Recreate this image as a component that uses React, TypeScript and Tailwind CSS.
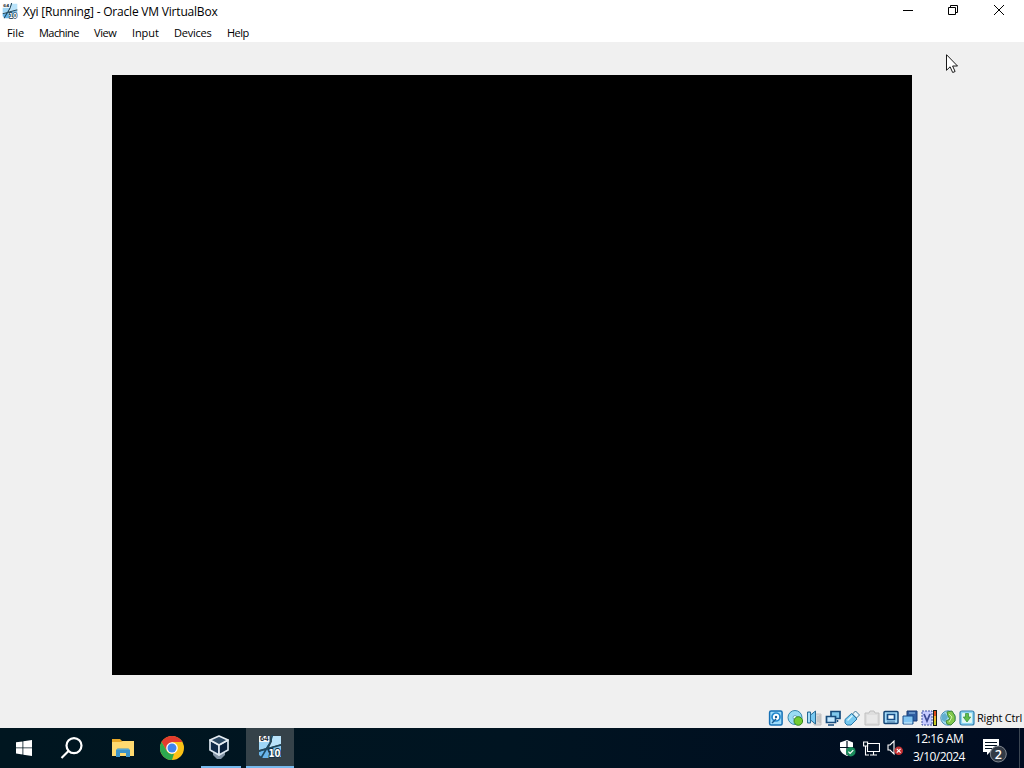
import type { ReactNode } from 'react'

const menus = [
  { label: 'File', className: 'w-8 tracking-[-0.1px]' },
  { label: 'Machine', className: 'w-[55px] tracking-[-0.55px]' },
  { label: 'View', className: 'w-[38px] tracking-[-0.4px]' },
  { label: 'Input', className: 'w-[42px] tracking-[-0.1px]' },
  { label: 'Devices', className: 'w-[53px] tracking-[-0.25px]' },
  { label: 'Help', className: 'w-8 tracking-[-0.5px]' },
]

function GuestIcon({ className }: { className: string }) {
  return (
    <svg viewBox="0 0 24 24" className={className}>
      <path d="M1 7h11L8 13 1 15z" fill="#9ed6f6" />
      <path d="M13.5 1H23v8l-12 3.5 3-6z" fill="#b9e3fa" />
      <path d="M1 17l8-3 4 9H5l-4-3z" fill="#69b5ea" />
      <path d="M12 13l11-3v12h-7z" fill="#8bc9ef" />
      <path d="M14.5 0L12 8 3 23M1 16l22-6M10 13l5 10" stroke="#1d485f" strokeWidth="1.6" fill="none" />
      <path d="M1 1h10.5v6H1z" fill="#f3f6f7" />
      <text x="2" y="6.2" fontSize="6.5" fontWeight="700" textLength="8.5" lengthAdjust="spacingAndGlyphs" fontFamily="Liberation Sans, sans-serif" fill="#18252d">64</text>
      <text x="10.5" y="22" fontSize="10.5" fontWeight="700" fontFamily="DejaVu Sans, sans-serif" textLength="12" lengthAdjust="spacingAndGlyphs" fill="#fff" stroke="#143247" strokeWidth="2" paintOrder="stroke">10</text>
    </svg>
  )
}

function StatusIcon({ children }: { children: ReactNode }) {
  return (
    <svg viewBox="0 0 16 16" className="h-4 w-4 shrink-0">
      {children}
    </svg>
  )
}

function TitleBar() {
  return (
    <header className="flex h-6 items-start bg-white">
      <GuestIcon className="ml-0.5 mt-[3px] h-4 w-4" />
      <span className="ml-[5px] mt-px flex h-[22px] w-[200px] items-center whitespace-nowrap text-[12px] tracking-[-0.2px]">
        Xyi [Running] - Oracle VM VirtualBox
      </span>
      <div className="ml-auto mr-px flex h-5 items-center">
        <div className="flex w-[46px] justify-center">
          <svg viewBox="0 0 10 10" className="h-2.5 w-2.5"><path d="M0 5.5h10" stroke="#000" /></svg>
        </div>
        <div className="flex w-11 justify-center">
          <svg viewBox="0 0 10 10" className="h-2.5 w-2.5">
            <path d="M.5 2.5h7v7h-7zM2.5 2.5v-2h7v7h-2" fill="none" stroke="#000" />
          </svg>
        </div>
        <div className="flex w-12 justify-center">
          <svg viewBox="0 0 10 10" className="h-2.5 w-2.5"><path d="M0 0l10 10M10 0L0 10" stroke="#000" /></svg>
        </div>
      </div>
    </header>
  )
}

function StatusBar() {
  return (
    <footer className="flex h-5 items-center justify-end bg-[#f0f0f0] pr-px">
      <div className="mr-[2px] flex gap-[3.1px]">
        <StatusIcon>
          <rect x="1.6" y="1" width="12.5" height="14" rx="1.5" fill="#9edcfb" stroke="#1670b5" strokeWidth="1.5" />
          <circle cx="8" cy="7" r="4" fill="#fff" stroke="#2488cd" strokeWidth="1.7" />
          <circle cx="8" cy="7" r="1.2" fill="#185b91" />
          <path d="M4 13l4-4" stroke="#185b91" strokeWidth="1.5" />
        </StatusIcon>
        <StatusIcon>
          <circle cx="8" cy="7.5" r="7" fill="#9adcf5" stroke="#3687ae" />
          <circle cx="8" cy="7.5" r="2" fill="#eefaff" stroke="#6eabc5" />
          <circle cx="11.3" cy="11" r="4.3" fill="#73cc32" stroke="#358320" />
        </StatusIcon>
        <StatusIcon>
          <path d="M8 4h7v11H8z" fill="#d9d9d9" stroke="#c2c2c2" />
          <path d="M1.5 2h3v11h-3zM4.5 5l5-4v13l-5-4z" fill="#79c9f1" stroke="#286a93" />
          <path d="M3 3v9" stroke="#d8f2ff" />
          <path d="M12 6v6M14 5v8" stroke="#b5b5b5" />
        </StatusIcon>
        <StatusIcon>
          <path d="M6 1.5h9v7H6z" fill="#80c8ec" stroke="#174c7d" strokeWidth="1.7" />
          <path d="M1.5 6.5h9v6h-9z" fill="#c5e9ff" stroke="#174c7d" strokeWidth="1.7" />
          <path d="M3 15h6M12.5 10v2" stroke="#174c7d" strokeWidth="1.5" />
        </StatusIcon>
        <StatusIcon>
          <path d="M11.5 1l4 4-3 3-4-4z" fill="#e8f5fb" stroke="#437896" />
          <path d="M7.5 3.5l5.5 5.5-6 6H3l-2-2V9.5z" fill="#77c9ef" stroke="#2879aa" />
          <path d="M3.5 10.5l5-5" stroke="#d8f6ff" strokeWidth="1.5" />
        </StatusIcon>
        <StatusIcon>
          <path d="M1 3h4l1-2h4l1 2h4v12H1z" fill="#dedede" stroke="#c0c0c0" />
          <path d="M3 5h10v8H3z" fill="#e8e8e8" />
        </StatusIcon>
        <StatusIcon>
          <rect x="1" y="1.5" width="14" height="12" rx="1" fill="#a5dbf9" stroke="#154575" strokeWidth="1.5" />
          <path d="M4.5 4.5h7v5h-7z" fill="#f3fcff" stroke="#174d86" strokeWidth="1.7" />
          <path d="M4 12h8" stroke="#416f9a" />
        </StatusIcon>
        <StatusIcon>
          <path d="M5 1h10v10H5z" fill="#315ea1" stroke="#183b73" />
          <path d="M7 3h6" stroke="#9bc9ed" />
          <path d="M1 6h10v8H1z" fill="#82c5f2" stroke="#184d8a" />
          <path d="M2 13h8" stroke="#d7f3ff" />
        </StatusIcon>
        <StatusIcon>
          <rect x="1" y="1" width="10" height="14" fill="#c6cbff" stroke="#4054a4" strokeDasharray="2 1" />
          <path d="M3 4l3 7 3-7" fill="none" stroke="#3b4994" strokeWidth="1.8" />
          <path d="M12 0h4v16h-4z" fill="#192019" />
          <path d="M13 1h2v5h-2z" fill="#e04a18" />
          <path d="M13 6h2v5h-2z" fill="#efb52a" />
          <path d="M13 11h2v4h-2z" fill="#c5cc23" />
        </StatusIcon>
        <StatusIcon>
          <circle cx="8" cy="8" r="7.2" fill="#a0dced" stroke="#4a8eb4" />
          <path d="M2 5l3-2 3 4-3 5-3-2" fill="#62aed0" />
          <path d="M7 2l5-1 3 5v5l-4 4-4-1-1-3 4-2-2-3z" fill="#82c84c" stroke="#40883b" />
          <path d="M9 4l3 3-3 5" fill="none" stroke="#d2f0ac" />
        </StatusIcon>
        <StatusIcon>
          <rect x="1" y="1" width="14" height="14" rx="2" fill="#8ed6f3" stroke="#337fae" strokeWidth="1.2" />
          <rect x="3" y="3" width="10" height="10" rx="1" fill="#e2f7f1" />
          <path d="M6.5 3.5h3V7h2.2L8 12 4.3 7h2.2z" fill="#61bd4b" stroke="#2d8b38" strokeWidth=".7" />
        </StatusIcon>
      </div>
      <span className="w-[46px] whitespace-nowrap text-[11px] tracking-[-0.2px]">Right Ctrl</span>
    </footer>
  )
}

function Taskbar() {
  return (
    <nav className="flex h-10 items-center bg-linear-to-r from-[#001620] via-[#001421] to-[#000b20] text-white">
      <div className="flex w-12 justify-center">
        <svg viewBox="0 0 16 16" className="h-4 w-4" fill="#fff">
          <path d="M0 2.3l6.5-.9v6.1H0zM7.3 1.3L16 0v7.5H7.3zM0 8.3h6.5v6.2L0 13.6zM7.3 8.3H16V16l-8.7-1.3z" />
        </svg>
      </div>
      <div className="flex w-12 justify-center">
        <svg viewBox="0 0 24 24" className="h-6 w-6" fill="none" stroke="#fff" strokeWidth="2.2">
          <circle cx="14" cy="9.6" r="7.5" />
          <path d="M8.5 15L1.5 22" />
        </svg>
      </div>
      <div className="flex w-[53px] justify-center">
        <svg viewBox="0 0 22 18" className="h-[18px] w-[22px]">
          <path d="M0 0h8l2 2h12v15H0z" fill="#e9a928" />
          <path d="M0 3h9l2-1h11v15H0z" fill="#ffda70" />
          <path d="M4 18v-7l1.5-1.5h11L18 11v7h-4v-4H8v4z" fill="#3c93c8" />
          <path d="M5 10.5h12" stroke="#55a8d6" />
        </svg>
      </div>
      <div className="flex w-[46px] justify-center">
        <svg viewBox="0 0 24 24" className="h-6 w-6">
          <circle cx="12" cy="12" r="12" fill="#fbc116" />
          <path d="M1.6 6A12 12 0 0 1 22.4 6H12L6.8 15z" fill="#e33b2e" />
          <path d="M1.6 6L6.8 15A6 6 0 0 0 14 17.7L12 24A12 12 0 0 1 1.6 6z" fill="#2da94f" />
          <circle cx="12" cy="12" r="5.8" fill="#fff" />
          <circle cx="12" cy="12" r="4.5" fill="#4084ee" />
        </svg>
      </div>
      <div className="ml-1.5 flex h-10 w-10 flex-col items-center justify-between">
        <svg viewBox="0 0 20 24" className="ml-[-4px] mt-[7px] h-6 w-5">
          <path d="M4 17l6 3 6-3v3l-4 4H8l-4-4z" fill="#8294a5" />
          <path d="M1 5l9 5v10l-9-5z" fill="#102b49" stroke="#dbe6ef" strokeWidth="1.7" strokeLinejoin="round" />
          <path d="M19 5l-9 5v10l9-5z" fill="#09203a" stroke="#dbe6ef" strokeWidth="1.7" strokeLinejoin="round" />
          <path d="M10 1l9 4-9 5-9-5z" fill="#294762" stroke="#e6edf3" strokeWidth="1.7" strokeLinejoin="round" />
        </svg>
        <div className="h-0.5 w-10 bg-[#76b9ed]" />
      </div>
      <div className="ml-[5px] flex h-10 w-12 flex-col items-center justify-between bg-[#354249]">
        <GuestIcon className="mt-[7px] h-6 w-6" />
        <div className="h-0.5 w-12 bg-[#76b9ed]" />
      </div>
      <div className="ml-auto flex h-10 items-center">
        <svg viewBox="0 0 16 17" className="mr-[7px] h-[17px] w-4">
          <path d="M7 0l6 2.5V8c0 4-3 6-6 8-4-2-7-4-7-8V2.5z" fill="#fff" />
          <path d="M7 1v14M0 7.5h13" stroke="#00101f" strokeWidth="1.2" />
          <circle cx="10.8" cy="11.7" r="4.8" fill="#198b5b" />
          <path d="M8.4 11.7l1.7 1.8 3.2-3.3" fill="none" stroke="#fff" strokeWidth="1.2" />
        </svg>
        <svg viewBox="0 0 17 15" className="mr-[7px] h-[15px] w-[17px]" fill="none" stroke="#fff" strokeWidth="1.1">
          <path d="M4.5 2.5h12v8h-12zM10.5 11v3M7 14h7M2.5 5v9H6" />
          <path d="M.6 1h4v4h-4z" fill="#00101f" />
        </svg>
        <svg viewBox="0 0 17 16" className="mr-[8px] h-4 w-[17px]">
          <path d="M1 5h2l4-4v13l-4-4H1z" fill="none" stroke="#fff" strokeWidth="1.1" />
          <circle cx="11.7" cy="10.8" r="4.3" fill="#c63234" />
          <path d="M9.8 8.9l3.8 3.8M13.6 8.9l-3.8 3.8" stroke="#fff" strokeWidth="1.1" />
        </svg>
        <div className="flex h-10 w-[54px] flex-col items-center justify-center gap-px whitespace-nowrap pb-0.5 text-[12px] leading-[17px]">
          <span className="tracking-[-0.45px]">12:16 AM</span>
          <span className="tracking-[-0.55px]">3/10/2024</span>
        </div>
        <svg viewBox="0 0 24 24" className="ml-[17px] mt-1.5 h-6 w-6">
          <path d="M0 0h16v13H7l-3 3v-3H0z" fill="#fff" />
          <path d="M2 3.5h12M2 6.5h12M2 9.5h7" stroke="#00101f" />
          <circle cx="15.3" cy="15" r="8" fill="#323a45" stroke="#828891" />
          <text x="15.3" y="19.5" fontSize="12.5" fontWeight="600" textAnchor="middle" fill="#fff">2</text>
        </svg>
        <div className="ml-[12px] h-10 w-[5px] border-l border-[#3c4652]" />
      </div>
    </nav>
  )
}

export default function App() {
  return (
    <div className="relative flex h-[768px] w-[1024px] flex-col overflow-hidden bg-[#f0f0f0] font-['Open_Sans','Noto_Sans',sans-serif] text-black">
      <TitleBar />
      <div className="flex h-[18px] items-center bg-white pl-[7px] text-[11px] leading-[18px]">
        {menus.map((menu) => (
          <span key={menu.label} className={menu.className}>
            {menu.label}
          </span>
        ))}
      </div>
      <main className="flex h-[666px] justify-center pt-[33px]">
        <div className="h-[600px] w-[800px] bg-black" />
      </main>
      <StatusBar />
      <Taskbar />
      <svg viewBox="0 0 12 19" className="absolute left-[946px] top-[54px] h-[19px] w-3">
        <path d="M.5.7v15.6l3.6-3.5 2.6 5.7 2.4-1-2.5-5.5h4.9z" fill="#fff" stroke="#000" strokeWidth=".9" />
      </svg>
    </div>
  )
}
